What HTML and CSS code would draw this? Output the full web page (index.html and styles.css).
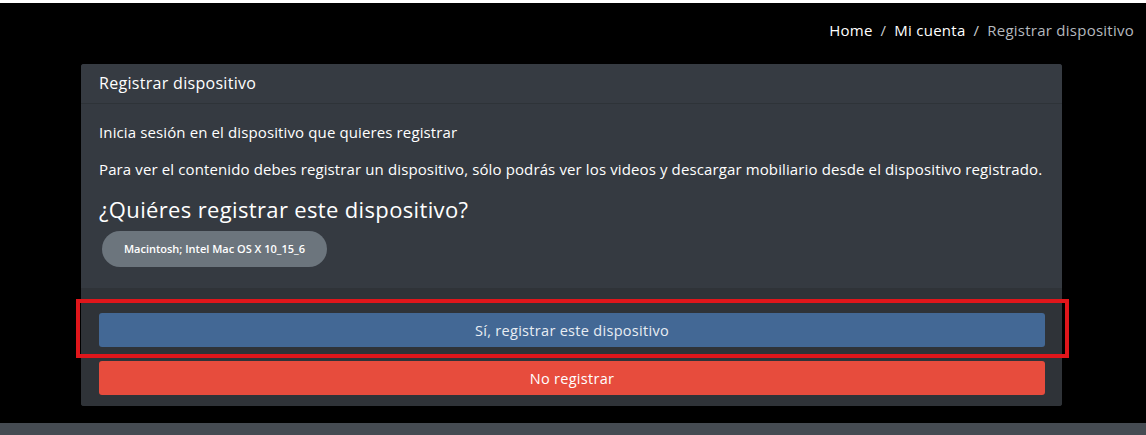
FILE: index.html
```html
<!DOCTYPE html>
<html lang="es">
<head>
<meta charset="utf-8">
<title>Registrar dispositivo</title>
<link rel="stylesheet" href="styles.css">
</head>
<body>
<div class="page">
  <nav class="crumbs">
    <span class="crumb">Home</span>
    <span class="sep">/</span>
    <span class="crumb">Mi cuenta</span>
    <span class="sep">/</span>
    <span class="crumb current">Registrar dispositivo</span>
  </nav>
  <section class="card">
    <header class="card-header">Registrar dispositivo</header>
    <div class="card-body">
      <p class="line">Inicia sesión en el dispositivo que quieres registrar</p>
      <p class="line">Para ver el contenido debes registrar un dispositivo, sólo podrás ver los videos y descargar mobiliario desde el dispositivo registrado.</p>
      <h2 class="question">¿Quiéres registrar este dispositivo?</h2>
      <span class="badge">Macintosh; Intel Mac OS X 10_15_6</span>
    </div>
    <footer class="card-footer">
      <button class="btn btn-primary">Sí, registrar este dispositivo</button>
      <button class="btn btn-danger">No registrar</button>
      <div class="highlight"></div>
    </footer>
  </section>
</div>
<div class="bottom-bar"></div>
</body>
</html>
```
FILE: styles.css
```css
* { box-sizing: border-box; }
html, body { margin: 0; padding: 0; }
body {
  background: #000;
  border-top: 3px solid #fff;
  font-family: "Open Sans", "DejaVu Sans", sans-serif;
  color: #fff;
  height: 435px;
  overflow: hidden;
  display: flex;
  flex-direction: column;
}
.page {
  flex: 1;
  display: flex;
  flex-direction: column;
}
.crumbs {
  display: flex;
  justify-content: flex-end;
  align-items: center;
  gap: 8px;
  padding: 11px 12px 2px 0;
  height: 44px;
  font-size: 15px;
  line-height: 20px;
  letter-spacing: 0.25px;
}
.crumb { color: #fff; }
.crumb.current { color: #b4b9be; }
.sep { color: #c9cdd1; }
.card {
  margin: 17px 0 0 81px;
  width: 981px;
  background: #343a40;
  border-radius: 3px;
  display: flex;
  flex-direction: column;
}
.card-header {
  height: 40px;
  padding: 9px 18px 11px;
  font-size: 16px;
  line-height: 20px;
  letter-spacing: 0.3px;
  border-bottom: 1px solid #2e3338;
  background: #363b42;
  border-radius: 3px 3px 0 0;
}
.card-body {
  height: 184px;
  padding: 18px 18px 0;
  background: #353a41;
}
.line {
  margin: 0 0 17px;
  font-size: 15px;
  line-height: 20px;
  letter-spacing: 0.12px;
  white-space: nowrap;
}
.question {
  margin: 0 0 9px;
  font-size: 22px;
  line-height: 26px;
  font-weight: 400;
  letter-spacing: 0.35px;
}
.badge {
  display: inline-block;
  margin-left: 3px;
  width: 225px;
  height: 36px;
  line-height: 36px;
  border-radius: 18px;
  background: #6c757d;
  font-size: 11px;
  font-weight: 600;
  text-align: center;
}
.card-footer {
  position: relative;
  padding: 25px 17px 11px 18px;
  background: #2f3338;
  display: flex;
  flex-direction: column;
  gap: 14px;
  border-radius: 0 0 3px 3px;
}
.btn {
  height: 34px;
  border: none;
  border-radius: 3px;
  font-family: inherit;
  font-size: 14.5px;
  color: #fff;
  letter-spacing: 0.3px;
}
.btn-primary { background: #436895; color: #e8edf3; }
.btn-danger { background: #e74c3d; }
.highlight {
  position: absolute;
  left: -5px;
  right: -7px;
  top: 11px;
  height: 59px;
  border: 4px solid #e0161b;
  pointer-events: none;
}
.bottom-bar {
  height: 12px;
  background: #454b52;
}
```
